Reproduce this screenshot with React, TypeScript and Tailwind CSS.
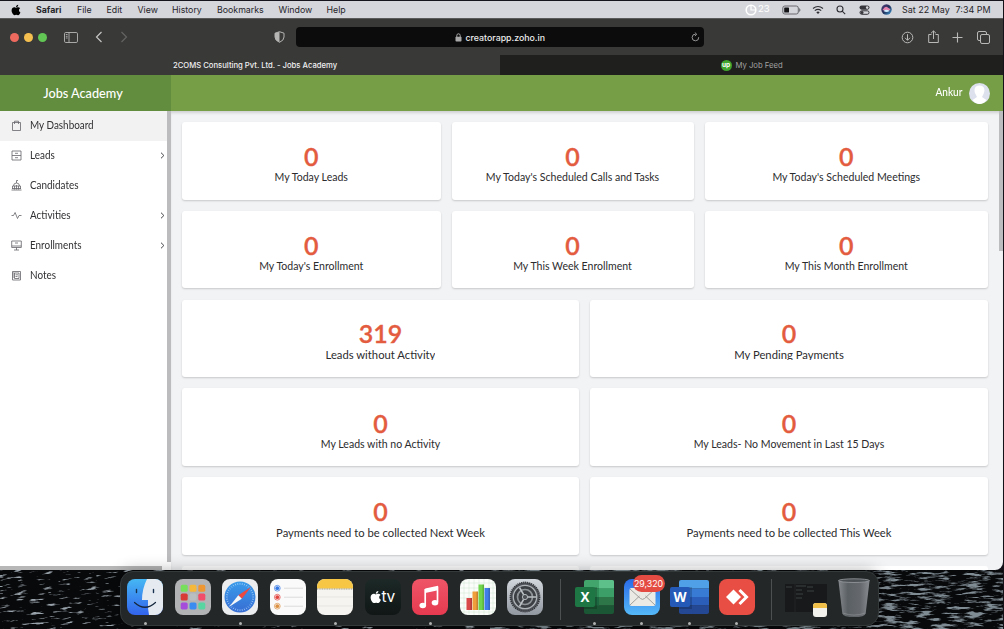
import React from "react";
import { FaApple } from "react-icons/fa";

type CardSpec = { values: string[]; labels: string[]; number: string; label: string };

function Card({ value, label, numberClass, labelClass }: { value: string; label: string; numberClass: string; labelClass: string }) {
  return (
    <div className="flex h-[77.5px] flex-col items-center rounded-[3px] bg-white shadow-[0_1px_2px_rgba(0,0,0,0.18)]">
      <div className={`text-[25px] leading-[31px] font-semibold text-[#e35c3f] [-webkit-text-stroke:0.35px_#e35c3f] ${numberClass}`}>{value}</div>
      <div className={`whitespace-nowrap text-[#2c2c2e] ${labelClass}`}>{label}</div>
    </div>
  );
}

function MenuBar() {
  return (
    <div className="flex h-[18px] w-[1003px] shrink-0 items-center border-t border-[#15131c] bg-[#d5d6dc] text-[8.8px] text-[#252529]">
      <FaApple className="ml-[10px] h-[12px] w-[12px] text-black" />
      <span className="ml-[14px] w-[41px] font-bold">Safari</span>
      <span className="w-[29.5px]">File</span>
      <span className="w-[31px]">Edit</span>
      <span className="w-[34.5px]">View</span>
      <span className="w-[45px]">History</span>
      <span className="w-[61.5px]">Bookmarks</span>
      <span className="w-[48px]">Window</span>
      <span>Help</span>
      <div className="mr-[12.5px] ml-auto flex items-center">
        <svg width="12" height="12" viewBox="0 0 12 12" fill="none" stroke="#fff" strokeWidth="1.6">
          <circle cx="6" cy="6" r="4.8" />
          <path d="M6 2v4h4" strokeWidth="1.2" />
        </svg>
        <span className="ml-[1px] text-[9.5px] text-white">23</span>
        <svg className="ml-[12px]" width="19" height="10" viewBox="0 0 19 10" fill="none">
          <rect x="0.8" y="1" width="15.5" height="8" rx="2" stroke="#5b5b60" strokeWidth="0.9" />
          <rect x="2.2" y="2.4" width="4.8" height="5.2" rx="0.7" fill="#151518" />
          <path d="M17.4 3.5q1.1 1.5 0 3" stroke="#5b5b60" />
        </svg>
        <svg className="ml-[11.500px]" width="12" height="10" viewBox="0 0 12 10" fill="none" stroke="#2d2d32" strokeWidth="1.1">
          <path d="M1 3.5q5-4 10 0M2.8 5.6q3.2-2.5 6.4 0" />
          <path d="M4.3 7.2q1.7-1.3 3.4 0L6 9z" fill="#2d2d32" stroke="none" />
        </svg>
        <svg className="ml-[12px]" width="10" height="10" viewBox="0 0 10 10" fill="none" stroke="#2d2d32" strokeWidth="1.1">
          <circle cx="4" cy="4" r="3" />
          <path d="m6.2 6.2 3 3" />
        </svg>
        <svg className="ml-[13px]" width="11" height="10" viewBox="0 0 11 10">
          <rect x="0.5" y="0.5" width="10" height="4.2" rx="2.1" fill="#35353a" />
          <circle cx="8.2" cy="2.6" r="1.3" fill="#d5d6dc" />
          <rect x="1" y="5.8" width="9" height="3.5" rx="1.75" fill="#d5d6dc" stroke="#35353a" />
          <circle cx="3" cy="7.5" r="1.5" fill="#35353a" />
        </svg>
        <svg className="ml-[10.500px]" width="11" height="11" viewBox="0 0 11 11">
          <defs>
            <linearGradient id="siri" x1="0" x2="1" y2="1">
              <stop stopColor="#503a78" />
              <stop offset="0.5" stopColor="#24305c" />
              <stop offset="1" stopColor="#3aa0d8" />
            </linearGradient>
          </defs>
          <circle cx="5.5" cy="5.5" r="5.2" fill="url(#siri)" />
          <path d="M1.500 6q2.500-4 4.500-3t3.500 2.500q-2 2-4 1.500t-4-1" fill="#e583ae" />
          <path d="M2.500 7q3-2.500 6 0-3 2-6 0" fill="#cfeeff" />
        </svg>
        <span className="ml-[10.500px] w-[53.500px] text-[8.950px]">Sat 22 May</span>
        <span className="text-[8.950px]">7:34 PM</span>
      </div>
    </div>
  );
}

function Toolbar() {
  return (
    <div className="flex h-[37px] w-[1003px] shrink-0 items-center border-t border-[#5a5a5a] bg-[#393938]">
      <div className="ml-[9.5px] flex gap-[5px]">
        <i className="h-[9px] w-[9px] rounded-full bg-[#ee6a5f]" />
        <i className="h-[9px] w-[9px] rounded-full bg-[#f5bf4f]" />
        <i className="h-[9px] w-[9px] rounded-full bg-[#62c655]" />
      </div>
      <svg className="ml-[17.500px]" width="14" height="11" viewBox="0 0 14 11" fill="none" stroke="#b5b5b4" strokeWidth="0.9">
        <rect x="0.5" y="0.5" width="13" height="10" rx="1.3" />
        <path d="M5 .5v10M1.800 2.500h1.800M1.800 4.300h1.800M1.800 6h1.800" />
      </svg>
      <svg className="ml-[17px]" width="8" height="12" viewBox="0 0 8 12" fill="none" stroke="#c5c5c4" strokeWidth="1.2">
        <path d="M6.500 1 1.500 6l5 5" />
      </svg>
      <svg className="ml-[17px]" width="8" height="12" viewBox="0 0 8 12" fill="none" stroke="#646463" strokeWidth="1.2">
        <path d="m1.500 1 5 5-5 5" />
      </svg>
      <svg className="ml-[146px]" width="11" height="12" viewBox="0 0 11 12">
        <path d="M5.500.700 10 2.200V6q0 3.500-4.500 5.300Q1 9.500 1 6V2.200z" fill="none" stroke="#b5b5b4" />
        <path d="M5.500.700 1 2.200V6q0 3.500 4.500 5.300z" fill="#b5b5b4" />
      </svg>
      <div className="ml-[11px] flex h-[20px] w-[408px] items-center rounded-[4px] bg-[#0c0c0c]">
        <svg className="ml-[158.500px]" width="7" height="9" viewBox="0 0 7 9">
          <rect x="0.5" y="3.800" width="6" height="4.700" rx="0.8" fill="#a9a9a9" />
          <path d="M1.800 4V2.500a1.700 1.700 0 0 1 3.400 0V4" fill="none" stroke="#a9a9a9" />
        </svg>
        <span className="ml-[4px] pt-px text-[8.800px] font-medium text-[#ececec]">creatorapp.zoho.in</span>
        <svg className="mr-[4.500px] ml-auto" width="9" height="10" viewBox="0 0 9 10" fill="none" stroke="#a0a0a0" strokeWidth="0.9">
          <path d="M7.700 5.200a3.300 3.300 0 1 1-3-3M3.800.500l2 1.800-1.900 1.700" />
        </svg>
      </div>
      <div className="mr-[13px] ml-auto flex items-center text-[#b9b9b8]">
        <svg width="13" height="13" viewBox="0 0 13 13" fill="none" stroke="currentColor">
          <circle cx="6.500" cy="6.500" r="5.300" />
          <path d="M6.500 3.200v6M4 6.800l2.500 2.500L9 6.800" />
        </svg>
        <svg className="ml-[13.500px]" width="11" height="14" viewBox="0 0 11 14" fill="none" stroke="currentColor">
          <path d="M3.500 4.500H.700v8h9.600v-8H7.500M5.500 9V1M3 3.300 5.500.900 8 3.300" />
        </svg>
        <svg className="ml-[13.500px]" width="11" height="11" viewBox="0 0 11 11" fill="none" stroke="currentColor" strokeWidth="1.100">
          <path d="M5.500.500v10M.500 5.500h10" />
        </svg>
        <svg className="ml-[14px]" width="13" height="13" viewBox="0 0 13 13" fill="none" stroke="currentColor">
          <rect x="3.500" y="3.500" width="9" height="9" rx="1.500" />
          <path d="M3.500 9.500H2A1.500 1.500 0 0 1 .500 8V2A1.500 1.500 0 0 1 2 .500h6A1.500 1.500 0 0 1 9.500 2v1.500" />
        </svg>
      </div>
    </div>
  );
}

function Tabs() {
  return (
    <div className="flex h-[20px] w-[1003px] shrink-0 items-center bg-[#393938] text-[7.680px]">
      <div className="w-[500px] pt-px pl-[173px] font-medium whitespace-nowrap text-[#f0f0f0]">2COMS Consulting Pvt. Ltd. - Jobs Academy</div>
      <div className="flex h-full flex-1 items-center bg-[#1f1f1e] pl-[220.500px] text-[#a2a2a1]">
        <span className="flex h-[11px] w-[11px] items-center justify-center rounded-full bg-[#3fa52c] text-[6.500px] leading-none font-bold text-white">up</span>
        <span className="ml-[4px] pt-px text-[7.700px]">My Job Feed</span>
      </div>
    </div>
  );
}

const navIcons: Record<string, React.ReactNode> = {
  "My Dashboard": <path d="M1.500 2.500h8v8h-8zM3.500 4V1.200h4V4" />,
  Leads: <path d="M1 1h9v9H1zM1 5.500h9M4 3.300h3M4 7.700h3" />,
  Candidates: (
    <>
      <path d="M.500 10h10M1.500 9V6h8v3M2.500 6q0-3 3-3t3 3M5.500 3V.500h1.500M3.500 6v3.500M5.500 5v4.500M7.500 6v3.500" />
      <path d="M1 8.500h9" />
    </>
  ),
  Activities: <path d="M.500 5.500h2l1.600-3 2.400 6 1.500-3h2.500" />,
  Enrollments: <path d="M.700 1h9.600v6.500H.700zM.700 6h9.600M5.500 7.500V10M3 10h5M4 3h3" />,
  Notes: (
    <>
      <path d="M1.500 1.500h8v8.500h-8zM3.500 3h4.500v5.500H3.500zM1.500 3h2M1.500 5h2M1.500 7h2" />
      <path d="M4.500 4.800H7M4.500 6.500h2" />
    </>
  ),
};

function Sidebar() {
  return (
    <div className="relative flex w-[171px] shrink-0 flex-col bg-white">
      {Object.keys(navIcons).map((name, i) => (
        <div key={name} className={`flex h-[30px] w-[167px] items-center pb-px pl-[11px] text-[10.600px] text-[#303033] ${i === 0 ? "bg-[#f2f2f2]" : ""}`}>
          <svg width="11" height="11" viewBox="0 0 11 11" fill="none" stroke="#66666b" strokeWidth="0.800">
            {navIcons[name]}
          </svg>
          <span className="ml-[7.500px] origin-left scale-x-[0.935]">{name}</span>
          {["Leads", "Activities", "Enrollments"].includes(name) && (
            <svg className="mr-[2.500px] ml-auto" width="5" height="7" viewBox="0 0 5 7" fill="none" stroke="#45454a" strokeWidth="1">
              <path d="m1 .700 2.900 2.800L1 6.300" />
            </svg>
          )}
        </div>
      ))}
      <div className="absolute top-0 left-[167px] h-[451px] w-[4px] bg-[#bcbcbe]" />
      <div className="mt-auto mr-[9px] h-[4px] bg-[#b7b7b8]" />
    </div>
  );
}

const rows: CardSpec[] = [
  {
    values: ["0", "0", "0"],
    labels: ["My Today Leads", "My Today's Scheduled Calls and Tasks", "My Today's Scheduled Meetings"],
    number: "mt-[19px]",
    label: "mt-[-3px] text-[10.560px] leading-[16px]",
  },
  {
    values: ["0", "0", "0"],
    labels: ["My Today's Enrollment", "My This Week Enrollment", "My This Month Enrollment"],
    number: "mt-[19px]",
    label: "mt-[-3px] text-[10.560px] leading-[16px]",
  },
  {
    values: ["319", "0"],
    labels: ["Leads without Activity", "My Pending Payments"],
    number: "mt-[18px]",
    label: "mt-[-2px] h-[13.300px] overflow-hidden text-[11.250px] leading-[16px]",
  },
  {
    values: ["0", "0"],
    labels: ["My Leads with no Activity", "My Leads- No Movement in Last 15 Days"],
    number: "mt-[20px]",
    label: "mt-[-3px] text-[10.560px] leading-[16px]",
  },
  {
    values: ["0", "0"],
    labels: ["Payments need to be collected Next Week", "Payments need to be collected This Week"],
    number: "mt-[19px]",
    label: "mt-[-2px] text-[11.230px] leading-[16px]",
  },
];

function Dashboard() {
  return (
    <div className="flex w-[832px] flex-col gap-[11.300px] overflow-hidden rounded-br-[8px] bg-[#f2f3f5] pt-[11px] pr-[15px] pl-[11px] shadow-[inset_0_3px_3px_-1px_rgba(0,0,0,0.14)]">
      {rows.map((r, i) => (
        <div key={i} className={`grid gap-x-[11px] ${r.labels.length === 3 ? "grid-cols-[258.500px_242px_283.500px]" : "grid-cols-[397px_398px]"}`}>
          {r.labels.map((t, k) => <Card key={t} value={r.values[k]} label={t} numberClass={r.number} labelClass={r.label} />)}
        </div>
      ))}
      <div className="grid grid-cols-[397px_398px] gap-x-[11px]">
        <div className="h-[10px] rounded-t-[3px] bg-white" />
        <div className="h-[10px] rounded-t-[3px] bg-white" />
      </div>
    </div>
  );
}

function Sea() {
  return (
    <svg className="block h-[59px] w-[1003px]" viewBox="0 0 1003 59">
      <defs>
        <filter id="waves" x="0" y="0" width="100%" height="100%" colorInterpolationFilters="sRGB">
          <feTurbulence type="fractalNoise" baseFrequency="0.07 0.42" numOctaves="4" seed="11" />
          <feColorMatrix values="0 0 0 0 0.60  0 0 0 0 0.64  0 0 0 0 0.67  6 0 0 0 -3.550" />
        </filter>
        <filter id="waves2" x="0" y="0" width="100%" height="100%" colorInterpolationFilters="sRGB">
          <feTurbulence type="fractalNoise" baseFrequency="0.06 0.35" numOctaves="4" seed="4" />
          <feColorMatrix values="0 0 0 0 0.50  0 0 0 0 0.55  0 0 0 0 0.58  5 0 0 0 -2.450" />
        </filter>
      </defs>
      <rect width="1004" height="59" fill="#08090b" />
      <g transform="rotate(-6 60 30)">
        <rect x="-10" y="-20" width="500" height="130" filter="url(#waves)" />
      </g>
      <rect x="490" width="514" height="59" filter="url(#waves2)" />
    </svg>
  );
}

function Gradient({ id, from, to }: { id: string; from: string; to: string }) {
  return (
    <linearGradient id={id} x1="0" y1="0" x2="0" y2="1">
      <stop stopColor={from} />
      <stop offset="1" stopColor={to} />
    </linearGradient>
  );
}

function Slot({ children, dot = false }: { children: React.ReactNode; dot?: boolean }) {
  return (
    <div className="relative flex h-[47px] w-[36px] shrink-0 flex-col items-center">
      {children}
      {dot && <i className="mt-auto mb-[1px] h-[3px] w-[3px] shrink-0 rounded-full bg-[#b0b1b1]" />}
    </div>
  );
}

function Tile({ children, className = "" }: { children?: React.ReactNode; className?: string }) {
  return (
    <svg className={`h-[36px] w-[36px] shrink-0 rounded-[8px] ${className}`} viewBox="0 0 36 36">
      {children}
    </svg>
  );
}

function OfficeIcon({ letter, stripes, box }: { letter: string; stripes: string[]; box: string }) {
  return (
    <svg className="h-[36px] w-[40px] shrink-0" viewBox="0 0 40 36">
      <defs>
        <clipPath id={`doc${letter}`}><rect x="10" y="1" width="30" height="34" rx="2" /></clipPath>
      </defs>
      <g clipPath={`url(#doc${letter})`}>
        {[0, 1, 2, 3].map((i) => <rect key={i} x="10" y={1 + i * 8.500} width="30" height="8.600" fill={stripes[i]} />)}
        {letter === "X" && <path d="M25 1h15v8.500H25z" fill="#5dc08b" />}
        {letter === "X" && <path d="M25 9.500h15V18H25z" fill="#3d9f68" />}
        {letter === "X" && <path d="M10 18h15v8.500H10z" fill="#1d6840" />}
        <path d="M10 8h13v22H10z" fill="#000" opacity="0.18" />
      </g>
      <rect x="1" y="8" width="20" height="20" rx="2" fill={box} />
      <text x="11" y="22.700" fill="#fff" fontFamily="Open Sans, sans-serif" fontSize="13.500" fontWeight="700" textAnchor="middle">{letter}</text>
    </svg>
  );
}

const pads = ["#76df5b", "#f6b83a", "#ee9632", "#d83a35", "#b9bec1", "#f14c6a", "#a64cda", "#3b8cf1", "#58d5a0"];
const ticks = Array.from({ length: 36 }, (_, i) => i * 10);

function Dock() {
  return (
    <div className="absolute top-[571px] left-[120px] flex h-[55px] w-[759px] items-start gap-[11.500px] rounded-[13px] border border-[#34393a] bg-[#232727] pt-[7px] pl-[6px] shadow-[0_0_16px_rgba(0,0,0,0.32)]">
      <Slot dot>
        <Tile>
          <defs><Gradient id="finder" from="#45b7f3" to="#3263ec" /></defs>
          <rect width="36" height="36" fill="url(#finder)" />
          <path d="M20 0q-5 10-5 21h6q-.500 8 1 15h14V0z" fill="#e5eaf1" />
          <path d="M9.500 10.500v3M26.500 10.500v3" stroke="#17314f" strokeWidth="1.400" strokeLinecap="round" />
          <path d="M7.500 23.500q10.500 9.500 21 0" stroke="#17283d" strokeWidth="1.200" fill="none" strokeLinecap="round" />
        </Tile>
      </Slot>
      <Slot>
        <Tile className="bg-[#b2b3b5]">
          {pads.map((c, i) => <rect key={c} x={5.700 + (i % 3) * 8.800} y={5.800 + Math.floor(i / 3) * 8.800} width="7" height="7" rx="1.600" fill={c} />)}
        </Tile>
      </Slot>
      <Slot dot>
        <Tile className="bg-[#ecedee]">
          <defs><Gradient id="compass" from="#3a9bea" to="#376dd3" /></defs>
          <circle cx="18" cy="18" r="15.500" fill="url(#compass)" />
          {ticks.map((a) => <path key={a} d="M18 4v1.700" stroke="#b5dcff" strokeWidth="0.600" transform={`rotate(${a} 18 18)`} />)}
          <path d="m29 8-12.700 8.200 3.500 3.600z" fill="#ed493e" />
          <path d="m7 28 9.300-11.800 3.500 3.600z" fill="#f4f6f8" />
        </Tile>
      </Slot>
      <Slot>
        <Tile className="bg-[#fafafa]">
          {["#3478e5", "#e24440", "#dd9143"].map((c, i) => (
            <g key={c}>
              <circle cx="7.300" cy={9.200 + i * 9} r="1.900" fill={c} />
              <circle cx="7.300" cy={9.200 + i * 9} r="2.900" fill="none" stroke={c} strokeWidth="0.700" />
              <path d={`M14 ${9.200 + i * 9}h19`} stroke="#ceced0" strokeWidth="0.700" />
            </g>
          ))}
        </Tile>
      </Slot>
      <Slot dot>
        <Tile className="bg-[#f5f4f0]">
          <rect width="36" height="9.500" fill="#f6c644" />
          <path d="M0 10h36" stroke="#76705f" strokeWidth="0.700" strokeDasharray="1 .7" />
          <path d="M0 18h36M0 27h36" stroke="#dddcd8" strokeWidth="0.600" />
        </Tile>
      </Slot>
      <Slot>
        <div className="flex h-[36px] w-[36px] items-center justify-center rounded-[8px] bg-linear-to-b from-[#1c2927] to-[#101615] text-white">
          <FaApple className="h-[14px] w-[11.500px]" />
          <span className="text-[15.500px] leading-none tracking-tight">tv</span>
        </div>
      </Slot>
      <Slot dot>
        <Tile>
          <defs><Gradient id="music" from="#ee5567" to="#e73a50" /></defs>
          <rect width="36" height="36" fill="url(#music)" />
          <path d="M13.200 9.500 26 6.700v4.500L13.200 14z" fill="#fff" />
          <path d="M13.200 10v16M25.500 7.500v15.500" stroke="#fff" strokeWidth="1.700" />
          <ellipse cx="10.800" cy="26.500" rx="3.300" ry="2.700" fill="#fff" />
          <ellipse cx="23" cy="23.700" rx="3.300" ry="2.700" fill="#fff" />
        </Tile>
      </Slot>
      <Slot>
        <Tile className="bg-[#fbfdfb]">
          {[4, 9, 14, 19, 24, 29, 33].map((n) => <path key={n} d={`M${n} 0v36M0 ${n}h36`} stroke="#cfe6cf" strokeWidth="0.500" />)}
          <path d="M6.500 19H12v12H6.500z" fill="#d94949" />
          <path d="M12.500 12.500H18V31h-5.500z" fill="#f09d3b" />
          <path d="M18.500 5.500H24V31h-5.500z" fill="#70d64b" />
          <path d="M24.500 9H30v22h-5.500z" fill="#407ee9" />
          <path d="M10.500 19H12v12h-1.500zM16.500 12.500H18V31h-1.500zM22.500 5.500H24V31h-1.500zM28.500 9H30v22h-1.500z" opacity=".17" />
        </Tile>
      </Slot>
      <Slot>
        <Tile>
          <defs><Gradient id="settings" from="#d2d7dd" to="#9298a0" /></defs>
          <rect width="36" height="36" fill="url(#settings)" />
          <circle cx="18" cy="18" r="14.500" fill="#50545a" stroke="#34373b" strokeWidth="1.800" strokeDasharray="1.200 .8" />
          <circle cx="18" cy="18" r="11.700" fill="#3c4045" stroke="#aeb3b8" strokeWidth="1.300" />
          <circle cx="18" cy="18" r="7.500" fill="none" stroke="#8e9398" strokeWidth="1.700" />
          <path d="M18 18h11M18 18l-5.500-9.500M18 18l-5.500 9.500" stroke="#bbc0c5" strokeWidth="1.500" />
          <circle cx="18" cy="18" r="2.600" fill="#4c5055" stroke="#b2b7bc" />
        </Tile>
      </Slot>
      <i className="mr-[4px] ml-[5px] h-[41px] w-px bg-[#4c5051]" />
      <Slot dot><OfficeIcon letter="X" box="#1d7644" stripes={["#42a56c", "#2d8b56", "#2c7648", "#1c5735"]} /></Slot>
      <Slot dot>
        <Tile>
          <defs><Gradient id="mail" from="#2a6bea" to="#55b9f8" /></defs>
          <rect width="36" height="36" fill="url(#mail)" />
          <rect x="5.500" y="9" width="26" height="18" rx="2" fill="#eceae5" />
          <path d="m6 26 9.500-9M31 26l-9.500-9M6 10l10.500 9.500q2 1.800 4 0L31 10" fill="none" stroke="#989896" strokeWidth="0.900" />
        </Tile>
        <span className="absolute top-[-4px] left-[9px] flex h-[17px] w-[32px] items-center justify-center rounded-full bg-[#e44c43] text-[8.800px] text-white">29,320</span>
      </Slot>
      <Slot dot><OfficeIcon letter="W" box="#2459b7" stripes={["#50a0e8", "#387bd5", "#2b5dbb", "#254894"]} /></Slot>
      <Slot dot>
        <Tile className="rounded-[4px] bg-[#e84e43]">
          <path d="M14.500 10.500 22 18l-7.500 7.500L7 18z" fill="#fff" />
          <path d="m20.500 11 7 7-7 7" fill="none" stroke="#fff" strokeWidth="3" />
        </Tile>
      </Slot>
      <i className="mr-[2px] ml-[4.500px] h-[41px] w-px bg-[#4c5051]" />
      <svg className="mt-[4px] h-[36px] w-[43px] shrink-0" viewBox="0 0 43 36">
        <rect width="42" height="28" y="1" fill="#17191a" />
        <path d="M10 1v28" stroke="#232526" />
        <path d="M1 4h6M11 3h10M11 7h6M11 11h7M11 15h6M22 4h6M22 8h7" stroke="#3f4243" />
        <rect x="28" y="20" width="14" height="14" rx="3" fill="#f2f1ec" />
        <path d="M28 25v-2q0-3 3-3h8q3 0 3 3v2z" fill="#efbf49" />
      </svg>
      <svg className="-mt-px ml-[-3px] h-[41px] w-[34px] shrink-0" viewBox="0 0 34 42">
        <defs>
          <linearGradient id="bin">
            <stop stopColor="#85898d" /><stop offset="0.300" stopColor="#5b6064" /><stop offset="0.700" stopColor="#65696e" /><stop offset="1" stopColor="#898d92" />
          </linearGradient>
        </defs>
        <path d="M1 2h32l-4 34q-1 4-12 4T5 36z" fill="url(#bin)" />
        <ellipse cx="17" cy="2.700" rx="15.700" ry="1.900" fill="#4c5155" stroke="#9ca0a3" strokeWidth="0.800" />
        <path d="M6 36q11 4 22 0" stroke="#8d9194" strokeWidth="0.700" fill="none" />
      </svg>
    </div>
  );
}

export default function App() {
  return (
    <div className="relative flex h-[629px] w-[1004px] flex-col overflow-hidden bg-[#141218] font-['Inter',sans-serif]">
      <MenuBar />
      <Toolbar />
      <Tabs />
      <div className="flex h-[36px] w-[1003px] shrink-0 items-center bg-[#759e46] font-['Lato',sans-serif] text-white">
        <div className="flex h-full w-[171px] items-center justify-center bg-[#628d3e] pt-px pr-[5px] text-[12.700px] font-medium">Jobs Academy</div>
        <span className="ml-auto origin-right scale-x-[0.950] text-[10.600px] font-medium">Ankur</span>
        <svg className="mr-[13px] ml-[7px]" width="21" height="21" viewBox="0 0 21 21">
          <circle cx="10.500" cy="10.500" r="10.500" fill="#dde0ed" />
          <path d="M10.500 2.500c-6 0-5.500 6-4 8.500q1 2 1.500 3L3.500 17q3 4 7 4t7-4L13 14q.500-1 1.500-3c1.500-2.500 2-8.500-4-8.500" fill="#fff" />
        </svg>
      </div>
      <div className="flex h-[459px] w-[1003px] shrink-0 overflow-hidden font-['Lato',sans-serif]">
        <Sidebar />
        <Dashboard />
      </div>
      <Sea />
      <div className="absolute top-[111px] left-[999px] h-[140px] w-[4px] bg-[#bcbdbf]" />
      <Dock />
    </div>
  );
}
